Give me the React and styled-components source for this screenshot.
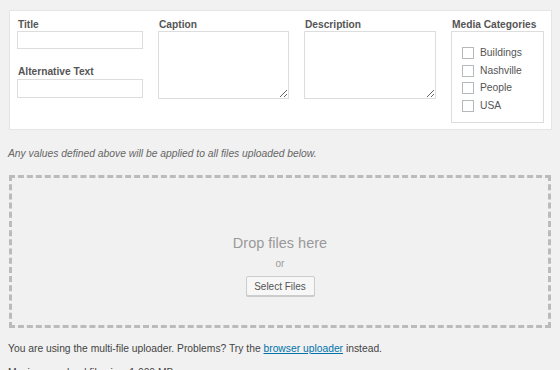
import React from "react";
import styled, { createGlobalStyle } from "styled-components";

const Global = createGlobalStyle`
  html, body {
    margin: 0;
    padding: 0;
    background: #f1f1f1;
    font-family: "Liberation Sans", Arial, sans-serif;
    color: #444;
  }
`;

const Page = styled.div`
  padding: 10px 8px 0 9px;
`;

const Panel = styled.div`
  background: #fff;
  border: 1px solid #e5e5e5;
  padding: 8px 7px 6px 7px;
  display: grid;
  grid-template-columns: 126px 131px 132px 93px;
  column-gap: 15px;
  width: 527px;
`;

const Field = styled.div`
  display: flex;
  flex-direction: column;
`;

const Label = styled.label`
  font-size: 10.2px;
  line-height: 12px;
  font-weight: bold;
  color: #555;
  margin-top: ${(p) => (p.$spaced ? "17px" : "0")};
  margin-bottom: ${(p) => (p.$spaced ? "1px" : "0")};
  padding-left: 1px;
`;

const Input = styled.input`
  box-sizing: border-box;
  width: 126px;
  height: ${(p) => p.$h || 18}px;
  border: 1px solid #ddd;
  background: #fff;
  margin: 0;
  padding: 2px 4px;
  font: inherit;
`;

const Area = styled.textarea`
  box-sizing: border-box;
  width: 100%;
  height: 68px;
  border: 1px solid #ddd;
  margin: 0;
  background: #fff;
  font: inherit;
`;

const CatBox = styled.div`
  box-sizing: border-box;
  height: 92px;
  border: 1px solid #ddd;
  padding: 15px 0 0 10px;
  display: flex;
  flex-direction: column;
  gap: 5.5px;
`;

const Cat = styled.label`
  display: flex;
  align-items: center;
  gap: 6px;
  font-size: 10.3px;
  line-height: 12px;
  color: #555;
`;

const Check = styled.input`
  appearance: none;
  margin: 0;
  width: 12px;
  height: 12px;
  border: 1px solid #b4b9be;
  background: #fff;
`;

const Note = styled.p`
  margin: 18px 0 0 -1px;
  font-size: 10.3px;
  line-height: 12px;
  font-style: italic;
  color: #666;
`;

const Drop = styled.div`
  box-sizing: border-box;
  margin-top: 15px;
  width: 542px;
  height: 153px;
  border: 3px dashed #bbb;
  display: flex;
  flex-direction: column;
  align-items: center;
  padding-top: 56px;
`;

const DropTitle = styled.div`
  font-size: 14.5px;
  line-height: 18px;
  color: #9a9a9a;
`;

const Or = styled.div`
  margin-top: 6px;
  font-size: 10px;
  line-height: 12px;
  color: #9a9a9a;
`;

const Button = styled.button`
  margin-top: 6px;
  height: 20px;
  width: 69px;
  padding: 0;
  background: #f7f7f7;
  border: 1px solid #ccc;
  border-radius: 2px;
  box-shadow: 0 1px 0 #ccc;
  font-family: inherit;
  font-size: 10px;
  color: #555;
`;

const Info = styled.p`
  margin: 14px 0 0 -1px;
  font-size: 10.3px;
  line-height: 13px;
  color: #444;
  & + & {
    margin-top: 11px;
  }
`;

const Link = styled.a`
  color: #0073aa;
  text-decoration: underline;
`;

const cats = ["Buildings", "Nashville", "People", "USA"];

export default function App() {
  return (
    <Page>
      <Global />
      <Panel>
        <Field>
          <Label>Title</Label>
          <Input />
          <Label $spaced>Alternative Text</Label>
          <Input $h={19} />
        </Field>
        <Field>
          <Label>Caption</Label>
          <Area />
        </Field>
        <Field>
          <Label>Description</Label>
          <Area />
        </Field>
        <Field>
          <Label>Media Categories</Label>
          <CatBox>
            {cats.map((c) => (
              <Cat key={c}>
                <Check type="checkbox" />
                {c}
              </Cat>
            ))}
          </CatBox>
        </Field>
      </Panel>
      <Note>Any values defined above will be applied to all files uploaded below.</Note>
      <Drop>
        <DropTitle>Drop files here</DropTitle>
        <Or>or</Or>
        <Button>Select Files</Button>
      </Drop>
      <Info>
        You are using the multi-file uploader. Problems? Try the{" "}
        <Link href="#">browser uploader</Link> instead.
      </Info>
      <Info>Maximum upload file size: 1,000 MB.</Info>
    </Page>
  );
}
